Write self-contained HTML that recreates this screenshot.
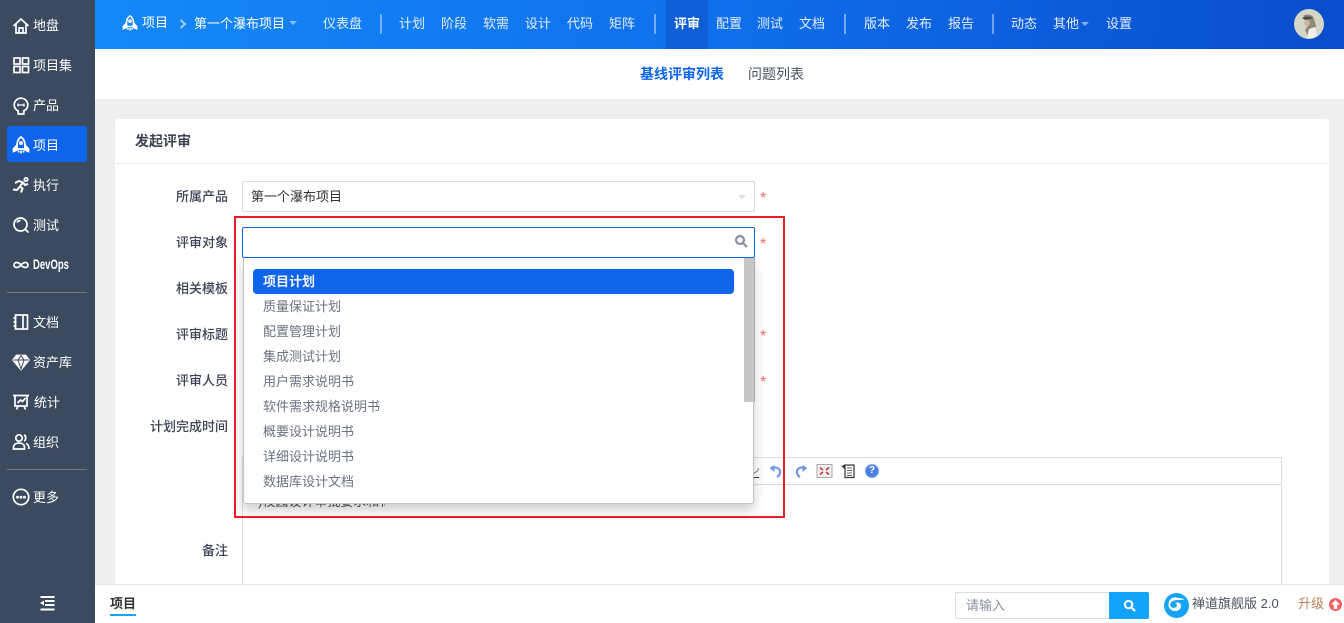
<!DOCTYPE html>
<html lang="zh">
<head>
<meta charset="utf-8">
<title>发起评审</title>
<style>
*{box-sizing:border-box}
html,body{margin:0;padding:0;width:1344px;height:623px;overflow:hidden;background:#efefef;font:13px/18px "Liberation Sans","Noto Sans CJK SC",sans-serif;color:#3c4353}
.a{position:absolute;white-space:nowrap}
#side{position:absolute;left:0;top:0;width:95px;height:623px;background:#3c4a5f}
#side .t{position:absolute;left:33px;color:#fff;font-size:13px;line-height:18px;white-space:nowrap}
#side svg{position:absolute;left:12px;width:18px;height:18px;fill:none;stroke:#fff;stroke-width:1.7}
#side .hr{position:absolute;left:7px;width:80px;height:1px;background:#6a7689}
#active{position:absolute;left:7px;top:126px;width:80px;height:36px;background:#0e65eb;border-radius:2px}
#top{position:absolute;left:95px;top:0;width:1249px;height:49px;background:linear-gradient(95deg,#1589f8 0%,#0f6fec 50%,#0a4ccb 100%)}
#top .n{position:absolute;top:15px;color:#e3edfc;line-height:18px;white-space:nowrap;font-size:13px}
#top .s{position:absolute;top:14px;width:2px;height:20px;background:rgba(255,255,255,.42)}
.tri{position:absolute;width:0;height:0;border-left:4px solid transparent;border-right:4px solid transparent;border-top:4px solid rgba(255,255,255,.5)}
#sub{position:absolute;left:95px;top:49px;width:1249px;height:50px;background:#fff}
#card{position:absolute;left:115px;top:119px;width:1214px;height:480px;background:#fff;border-radius:4px}
.lb{position:absolute;right:1116px;text-align:right;white-space:nowrap;font-weight:500;color:#3c4353;font-size:13px;line-height:18px}
.star{position:absolute;left:760px;color:#f56c6c;font-size:16px;line-height:18px}
.it{position:absolute;left:263px;color:#6b7280;font-size:13px;line-height:18px;white-space:nowrap}
#foot{position:absolute;left:95px;top:584px;width:1249px;height:39px;background:#fff;border-top:1px solid #e6e6e6}
</style>
</head>
<body>

<div id="side">
  <div id="active"></div>
  <svg style="top:17px" viewBox="0 0 18 18"><path d="M1.500 9 9 2l7.500 7M4 7.500V16h10V7.500M7 16v-5h4v5"/></svg>
  <div class="t" style="top:17px">地盘</div>
  <svg style="top:56px" viewBox="0 0 18 18"><rect x="2" y="2" width="6" height="6"/><rect x="10.500" y="2" width="6" height="6"/><rect x="2" y="10.500" width="6" height="6"/><rect x="10.500" y="10.500" width="6" height="6"/></svg>
  <div class="t" style="top:57px">项目集</div>
  <svg style="top:97px" viewBox="0 0 18 18"><path d="M6.200 14C3.500 12.500 2.200 10.500 2.200 8a6.800 6.800 0 0 1 13.600 0c0 2.500-1.300 4.500-4 6v3H6.200z"/><path stroke-width="1.300" d="M6 6.500v3M12 6.500v3M6 8h6"/></svg>
  <div class="t" style="top:97px">产品</div>
  <svg style="top:136px" viewBox="0 0 18 18"><path d="M9 1c3 2 4 5 4 8v4H5V9c0-3 1-6 4-8z"/><path fill="#fff" d="M5 9l-3.500 4v2.500L5 14zM13 9l3.500 4v2.500L13 14z"/><path d="M6.500 14.500v2M9 14.500v3M11.500 14.500v2"/><circle cx="9" cy="7" r="1.200" fill="#fff"/></svg>
  <div class="t" style="top:137px">项目</div>
  <svg style="top:176px" viewBox="0 0 18 18"><circle cx="14" cy="3.500" r="1.700"/><path stroke-width="2" d="M3 7l4-2 4 1.500-3 4 2.500 2-1.500 4M8 10.500l-3 3.500-4-.5M11 6.500l2 2.500 3-1"/></svg>
  <div class="t" style="top:177px">执行</div>
  <svg style="top:216px" viewBox="0 0 18 18"><circle cx="8.500" cy="8.500" r="6.500"/><path d="M13 13l3.500 3.500M5 6.500c1-1.500 2-2 3.500-2"/></svg>
  <div class="t" style="top:217px">测试</div>
  <svg style="top:256px" viewBox="0 0 18 18"><path d="M9 9C7.500 7 6 6.500 4.500 6.500a2.500 2.500 0 0 0 0 5C6 11.500 7.500 11 9 9c1.500-2 3-2.500 4.500-2.500a2.500 2.500 0 0 1 0 5C12 11.500 10.500 11 9 9z"/></svg>
  <div class="t" style="top:255px;font-weight:700;font-size:14px;transform:scaleX(.68);transform-origin:left center">DevOps</div>
  <div class="hr" style="top:292px"></div>
  <svg style="top:313px" viewBox="0 0 18 18"><rect x="3.500" y="2" width="12" height="14"/><path d="M11 2v14M1.500 5h3M1.500 9h3M1.500 13h3"/></svg>
  <div class="t" style="top:314px">文档</div>
  <svg style="top:353px" viewBox="0 0 18 18"><path fill="#fff" d="M4.500 2.500h9L17 7l-8 9.500L1 7z"/><path stroke="#3c4a5f" stroke-width="1" d="M1 7h16M6 7l3 9 3-9-3-4.500z"/></svg>
  <div class="t" style="top:354px">资产库</div>
  <svg style="top:393px" viewBox="0 0 18 18"><path d="M1 2.500h16M3 2.500V13h12V2.500M5.500 10l3-3 2 1.500 3-3.500M6 13l-1.500 3.500M12 13l1.500 3.500"/></svg>
  <div class="t" style="top:394px;left:34px">统计</div>
  <svg style="top:433px" viewBox="0 0 18 18"><circle cx="7" cy="5" r="3.200"/><path d="M1.500 16v-1.500C1.500 11.500 4 10 7 10s5.500 1.500 5.500 4.500V16zM12 2c2 .5 2.500 5 0 6M14 10.500c2 .8 3 2 3 5.500"/></svg>
  <div class="t" style="top:434px">组织</div>
  <div class="hr" style="top:469px"></div>
  <svg style="top:488px" viewBox="0 0 18 18"><circle cx="9" cy="9" r="7.700"/><circle cx="5.500" cy="9.200" r=".6"/><circle cx="9" cy="9.200" r=".6"/><circle cx="12.500" cy="9.200" r=".6"/></svg>
  <div class="t" style="top:489px">更多</div>
  <svg style="left:39px;top:595px;width:17px;height:17px;stroke-width:2" viewBox="0 0 17 17"><path d="M1.500 2h14M6 6h9.500M6 10h9.500M1.500 14.500h14"/><path fill="#fff" stroke="none" d="M1 8 5 5.500v5z"/></svg>
</div>

<div id="top">
  <svg class="a" style="left:27px;top:14px;width:16px;height:18px;fill:none;stroke:#fff;stroke-width:1.700" viewBox="0 0 18 18"><path d="M9 1c3 2 4 5 4 8v4H5V9c0-3 1-6 4-8z"/><path fill="#fff" d="M5 9l-3.500 4v2.500L5 14zM13 9l3.500 4v2.500L13 14z"/><path d="M6.500 14.500v2M9 14.500v3M11.500 14.500v2"/><circle cx="9" cy="7" r="1.200" fill="#fff"/></svg>
  <div class="n" style="left:47px;top:14px;color:#fff">项目</div>
  <svg class="a" style="left:84px;top:19px;width:8px;height:10px;fill:none;stroke:#a9cdfb;stroke-width:2" viewBox="0 0 8 10"><path d="M1.500 1 6 5 1.500 9"/></svg>
  <div class="n" style="left:99px;color:#fff">第一个瀑布项目</div>
  <div class="tri" style="left:194px;top:21px"></div>
  <div class="n" style="left:228px">仪表盘</div>
  <div class="s" style="left:285px"></div>
  <div class="n" style="left:304px">计划</div>
  <div class="n" style="left:346px">阶段</div>
  <div class="n" style="left:388px">软需</div>
  <div class="n" style="left:430px">设计</div>
  <div class="n" style="left:472px">代码</div>
  <div class="n" style="left:514px">矩阵</div>
  <div class="s" style="left:559px"></div>
  <div class="a" style="left:571px;top:0;width:42px;height:49px;background:#0e5fd6"></div>
  <div class="n" style="left:579px;color:#fff;font-weight:700">评审</div>
  <div class="n" style="left:621px">配置</div>
  <div class="n" style="left:662px">测试</div>
  <div class="n" style="left:704px">文档</div>
  <div class="s" style="left:749px"></div>
  <div class="n" style="left:769px">版本</div>
  <div class="n" style="left:811px">发布</div>
  <div class="n" style="left:853px">报告</div>
  <div class="s" style="left:897px"></div>
  <div class="n" style="left:916px">动态</div>
  <div class="n" style="left:958px">其他</div>
  <div class="tri" style="left:986px;top:22px"></div>
  <div class="n" style="left:1011px">设置</div>
  <svg class="a" style="left:1199px;top:9px;width:30px;height:30px" viewBox="0 0 30 30"><circle cx="15" cy="15" r="15" fill="#d3d6c8"/><path d="M9 7c5-3 10-1 11 3l2 7-3 9-5 1-3-6 4-6-2-5z" fill="#8f8a78"/><path d="M8 9c3-2 8-2 11 0l-3 1-5 1z" fill="#4c4a42"/><circle cx="13" cy="14" r="3" fill="#d2b6a0"/><path d="M13 29l2-9 6-2 2 8-4 3z" fill="#f1f1ea"/></svg>
</div>

<div id="sub">
  <div class="a" style="left:545px;top:16px;color:#0e65eb;font-weight:700;font-size:14px">基线评审列表</div>
  <div class="a" style="left:653px;top:16px;color:#4a505e;font-size:14px">问题列表</div>
</div>

<div id="card">
  <div class="a" style="left:20px;top:13px;font-weight:700;color:#3c4353;font-size:14px">发起评审</div>
  <div class="a" style="left:0;top:44px;width:1214px;height:1px;background:#eeeeee"></div>
</div>

<div class="lb" style="top:188px">所属产品</div>
<div class="lb" style="top:234px">评审对象</div>
<div class="lb" style="top:280px">相关模板</div>
<div class="lb" style="top:326px">评审标题</div>
<div class="lb" style="top:372px">评审人员</div>
<div class="lb" style="top:418px">计划完成时间</div>
<div class="lb" style="top:542px">备注</div>

<div class="a" style="left:242px;top:181px;width:513px;height:31px;border:1px solid #dcdcdc;border-radius:2px;background:#fff;padding:6px 8px;color:#333">第一个瀑布项目</div>
<div class="tri" style="left:738px;top:195px;border-top-color:#dde0e5"></div>
<div class="star" style="top:190px">*</div>
<div class="star" style="top:236px">*</div>
<div class="star" style="top:328px">*</div>
<div class="star" style="top:374px">*</div>

<!-- editor -->
<div class="a" style="left:242px;top:457px;width:1040px;height:140px;border:1px solid #dcdcdc;background:#fff"></div>
<div class="a" style="left:243px;top:484px;width:1038px;height:1px;background:#dcdcdc"></div>
<svg class="a" style="left:750px;top:462px;width:132px;height:18px" viewBox="0 0 132 18">
  <path d="M1 15.500h8" stroke="#333" fill="none"/><path d="M4 11c3-1 5-3 4-5" stroke="#888" fill="none"/>
  <path d="M23 6c4-1.500 7 1 7 4 0 2-1 4-3 5" stroke="#6d96dd" stroke-width="2.200" fill="none"/><path d="M24.500 3v7l-5-4z" fill="#6d96dd"/>
  <path d="M54 6c-4-1.500-7 1-7 4 0 2 1 4 3 5" stroke="#6d96dd" stroke-width="2.200" fill="none"/><path d="M52.500 3v7l5-4z" fill="#6d96dd"/>
  <rect x="67" y="2.500" width="15" height="13" fill="#f0f0f0" stroke="#aaa"/><path d="M70 5.500l3 2.500M79 5.500l-3 2.500M70 12.500l3-2.500M79 12.500l-3-2.500" stroke="#c33" stroke-width="1.500"/>
  <rect x="95" y="3" width="9" height="12.500" fill="#fff" stroke="#333" stroke-width="1.200"/><path d="M92 4l3 3V3zM97 6h5M97 8.500h5M97 11h5M97 13.500h5" stroke="#333" fill="#333" stroke-width=".8"/>
  <circle cx="122" cy="9" r="6.800" fill="#4d7fe0" stroke="#a4c0f0"/>
</svg>
<div class="a" style="left:868px;top:462px;width:8px;height:18px;color:#fff;font:700 10px/18px 'Liberation Sans',sans-serif;text-align:center">?</div>
<div class="a" style="left:258px;top:493px;height:18px;width:127px;overflow:hidden;color:#555;line-height:18px">)校园设计审批要求和标准</div>

<!-- dropdown -->
<div class="a" style="left:243px;top:258px;width:511px;height:246px;background:#fff;border:1px solid #c4c4c4;border-top:0;border-radius:0 0 3px 3px;box-shadow:0 6px 12px rgba(0,0,0,.2)"></div>
<div class="a" style="left:242px;top:227px;width:513px;height:31px;background:#fff;border:1px solid #0e65eb;border-radius:2px"></div>
<svg class="a" style="left:734px;top:234px;width:14px;height:14px;fill:none;stroke:#8a90a0;stroke-width:2.200" viewBox="0 0 14 14"><circle cx="6" cy="6" r="4"/><path d="M9 9l4 4"/></svg>
<div class="a" style="left:744px;top:258px;width:11px;height:144px;background:#c6c6c6;border-right:1px solid #a8a8a8"></div>
<div class="a" style="left:253px;top:269px;width:481px;height:25px;background:#0e65eb;border-radius:4px"></div>
<div class="it" style="top:273px;color:#eef3ff;font-weight:700">项目计划</div>
<div class="it" style="top:298px">质量保证计划</div>
<div class="it" style="top:323px">配置管理计划</div>
<div class="it" style="top:348px">集成测试计划</div>
<div class="it" style="top:373px">用户需求说明书</div>
<div class="it" style="top:398px">软件需求规格说明书</div>
<div class="it" style="top:423px">概要设计说明书</div>
<div class="it" style="top:448px">详细设计说明书</div>
<div class="it" style="top:473px">数据库设计文档</div>

<!-- red annotation -->
<div class="a" style="left:234px;top:216px;width:551px;height:302px;border:2px solid #ed1c24"></div>

<div id="foot">
  <div class="a" style="left:15px;top:10px;color:#333;font-weight:700">项目</div>
  <div class="a" style="left:15px;top:29px;width:26px;height:2px;background:#14a3f5"></div>
  <div class="a" style="left:860px;top:7px;width:155px;height:27px;border:1px solid #dcdcdc;border-radius:2px 0 0 2px;color:#8b90a0;padding:4px 10px">请输入</div>
  <div class="a" style="left:1014px;top:7px;width:40px;height:27px;background:#14a3fb;border-radius:0 2px 2px 0"></div>
  <svg class="a" style="left:1028px;top:14px;width:13px;height:13px;fill:none;stroke:#fff;stroke-width:2.200" viewBox="0 0 14 14"><circle cx="6" cy="6" r="4"/><path d="M9 9l4 4"/></svg>
  <svg class="a" style="left:1069px;top:8px;width:25px;height:25px" viewBox="0 0 25 25"><circle cx="12.500" cy="12.500" r="12.500" fill="#14a3f5"/><path d="M21 6c-4 2-10 0-13 2.500-2.500 2-2.500 5 0 6 2.500 1.200 5-.5 5-2.500 0-1-1-1.500-1.800-1 .8-2.500 5.500-1.800 5.800 1.500.3 3.500-3 6-6.500 5.500-4-.5-6.500-3.500-6-7C5 6 8.500 4 12.500 4.500c3 .3 5.500 1.500 8.500 1.500z" fill="#fff"/></svg>
  <div class="a" style="left:1097px;top:10px;color:#4a505e">禅道旗舰版 2.0</div>
  <div class="a" style="left:1203px;top:10px;color:#b8825a">升级</div>
  <div class="a" style="left:1234px;top:13px;width:13px;height:13px;border-radius:50%;background:#f56060"></div>
  <svg class="a" style="left:1236px;top:15px;width:9px;height:9px;fill:#fff" viewBox="0 0 9 9"><path d="M4.500 0 9 4.500H6.200V9H2.800V4.500H0z"/></svg>
</div>

</body>
</html>
